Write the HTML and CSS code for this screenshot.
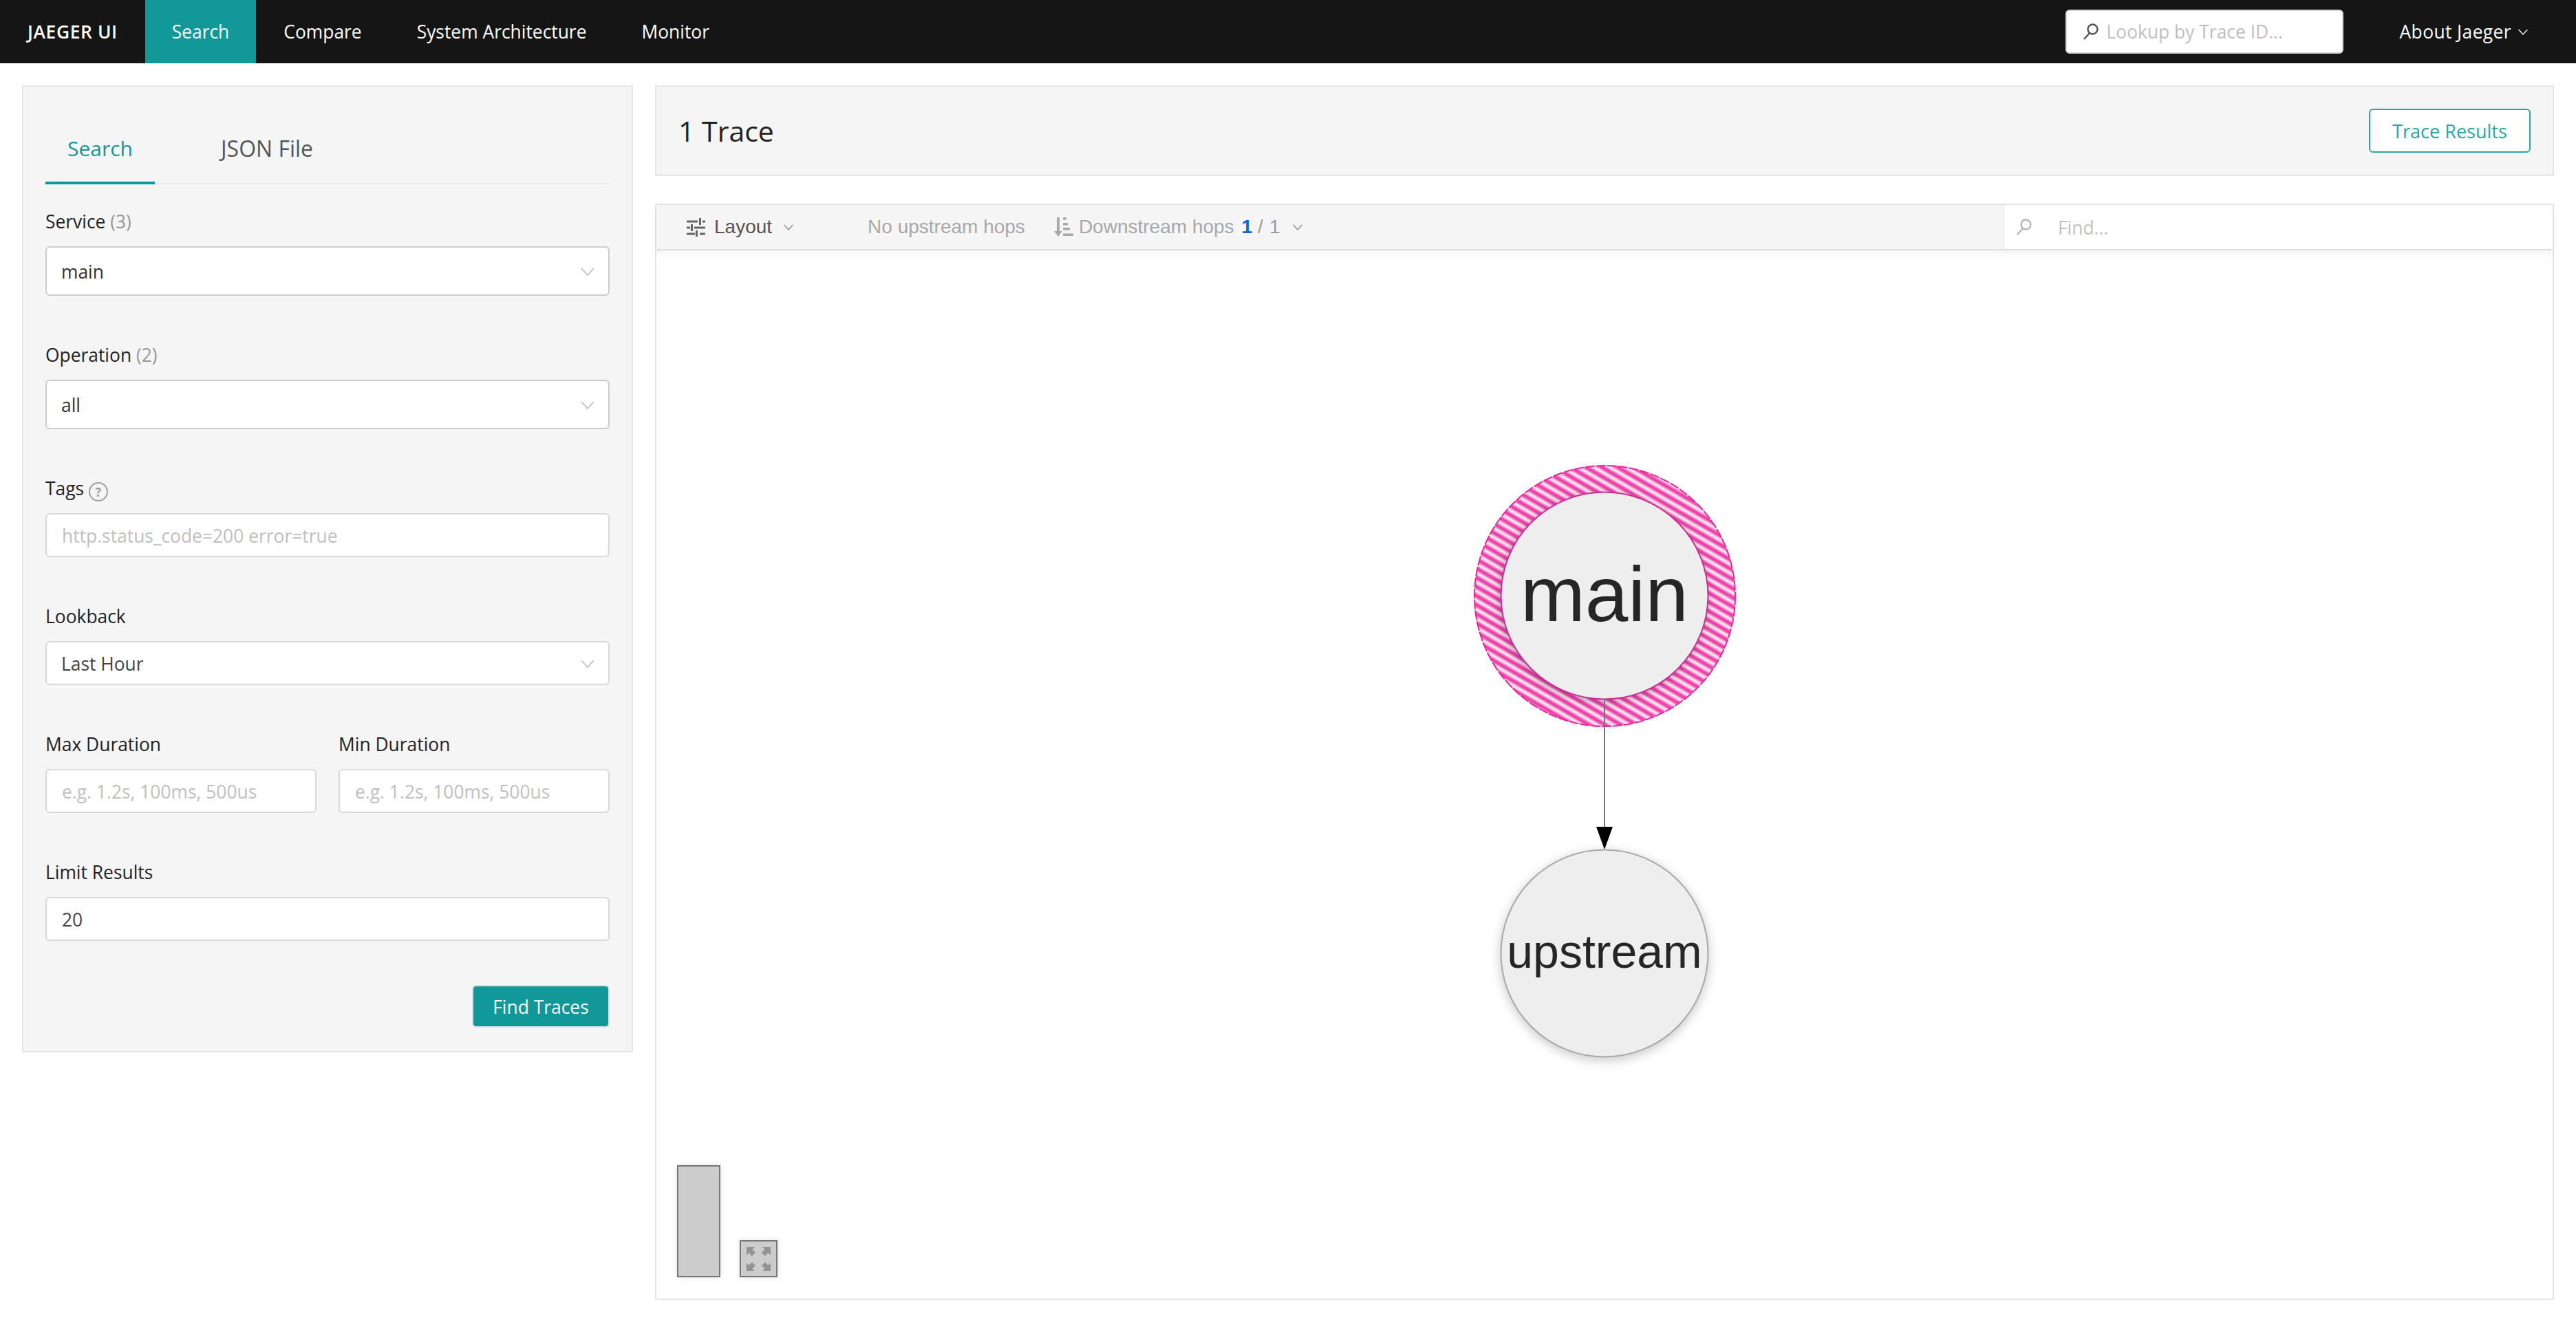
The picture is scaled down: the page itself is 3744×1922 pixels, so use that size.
FILE: index.html
```html
<!DOCTYPE html>
<html lang="en">
<head>
<meta charset="utf-8">
<title>Jaeger UI</title>
<link rel="stylesheet" href="styles.css">
</head>
<body>
<header class="topbar">
  <nav class="nav">
    <a class="nav-item brand">JAEGER UI</a>
    <a class="nav-item active">Search</a>
    <a class="nav-item">Compare</a>
    <a class="nav-item">System Architecture</a>
    <a class="nav-item">Monitor</a>
  </nav>
  <div class="lookup">
    <svg class="search-icon dark" viewBox="0 0 22 24"><circle cx="13.5" cy="8.5" r="7"/><path d="M9 14 L1 23"/></svg>
    <input class="lookup-input" placeholder="Lookup by Trace ID...">
  </div>
  <div class="about"><span class="about-text">About Jaeger</span>
    <svg class="chev chev-about" viewBox="0 0 20 12"><polyline points="1,1 10,11 19,1"/></svg>
  </div>
</header>

<main class="page">
  <aside class="search-panel">
    <div class="tabs">
      <div class="tab tab-on">Search</div>
      <div class="tab">JSON File</div>
    </div>
    <form class="form">
      <div class="field">
        <div class="label">Service <span class="count">(3)</span></div>
        <div class="select select-lg">main<svg class="chev" viewBox="0 0 20 12"><polyline points="1,1 10,11 19,1"/></svg></div>
      </div>
      <div class="field">
        <div class="label">Operation <span class="count">(2)</span></div>
        <div class="select select-lg">all<svg class="chev" viewBox="0 0 20 12"><polyline points="1,1 10,11 19,1"/></svg></div>
      </div>
      <div class="field">
        <div class="label">Tags <span class="help">?</span></div>
        <input class="input" placeholder="http.status_code=200 error=true">
      </div>
      <div class="field">
        <div class="label">Lookback</div>
        <div class="select">Last Hour<svg class="chev" viewBox="0 0 20 12"><polyline points="1,1 10,11 19,1"/></svg></div>
      </div>
      <div class="field two">
        <div>
          <div class="label">Max Duration</div>
          <input class="input" placeholder="e.g. 1.2s, 100ms, 500us">
        </div>
        <div>
          <div class="label">Min Duration</div>
          <input class="input" placeholder="e.g. 1.2s, 100ms, 500us">
        </div>
      </div>
      <div class="field">
        <div class="label">Limit Results</div>
        <input class="input" value="20">
      </div>
      <div class="actions"><button class="find" type="button">Find Traces</button></div>
    </form>
  </aside>

  <section class="results">
    <div class="results-head">
      <h2 class="title">1 Trace</h2>
      <button class="trace-results" type="button">Trace Results</button>
    </div>
    <div class="graph">
      <div class="toolbar">
        <div class="tools">
          <svg class="layout-icon" viewBox="0 0 27 27">
            <path d="M0 3.5H16V6.5H0Z M23 3.5H27V6.5H23Z M18 0H21V10H18Z M0 12.5H5V15.5H0Z M11 12.5H27V15.5H11Z M6 9H9V19H6Z M0 21.5H12V24.5H0Z M19 21.5H27V24.5H19Z M13 18H16V27H13Z"/>
          </svg>
          <span class="layout-label">Layout</span>
          <svg class="chev chev-tool" viewBox="0 0 20 12"><polyline points="1,1 10,11 19,1"/></svg>
          <span class="hops no-up">No upstream hops</span>
          <svg class="down-icon" viewBox="0 0 28 28">
            <path d="M4 0H8V20H12L6 28L0 20H4Z M13 0H18V3.5H13Z M13 8H20V11.5H13Z M13 15H23V18.500H13Z M13 23.500H28V27H13Z"/>
          </svg>
          <span class="hops">Downstream hops</span>
          <span class="hop-now">1</span>
          <span class="hop-sep">/</span>
          <span class="hop-total">1</span>
          <svg class="chev chev-hop" viewBox="0 0 20 12"><polyline points="1,1 10,11 19,1"/></svg>
        </div>
        <div class="find-box">
          <svg class="search-icon" viewBox="0 0 22 24"><circle cx="13.5" cy="8.5" r="7"/><path d="M9 14 L1 23"/></svg>
          <input class="find-input" placeholder="Find...">
        </div>
      </div>
      <div class="canvas">
        <svg class="ddg" viewBox="0 0 2756 1524">
          <defs>
            <linearGradient id="stripe" x1="0" y1="0" x2="0" y2="1">
              <stop offset="0" stop-color="#ea2ea0"/>
              <stop offset="0.2" stop-color="#f06cbc"/>
              <stop offset="0.38" stop-color="#f9cfe8"/>
              <stop offset="0.5" stop-color="#f5f0f3"/>
              <stop offset="0.62" stop-color="#f9cfe8"/>
              <stop offset="0.8" stop-color="#f06cbc"/>
              <stop offset="1" stop-color="#ea2ea0"/>
            </linearGradient>
            <pattern id="stripes" width="12" height="11.500" patternUnits="userSpaceOnUse" patternTransform="rotate(30)">
              <rect width="12" height="11.500" fill="url(#stripe)"/>
            </pattern>
          </defs>
          <circle class="halo" cx="1378.500" cy="502.500" r="189.500"/>
          <circle class="node node-main" cx="1378" cy="502" r="150.500"/>
          <line class="edge" x1="1378" y1="653" x2="1378" y2="840"/>
          <polygon class="arrow" points="1366,838 1390,838 1378,871"/>
          <circle class="node node-up" cx="1378" cy="1022" r="150.500"/>
          <text class="node-text text-main" x="1378" y="539">main</text>
          <text class="node-text text-up" x="1378" y="1043">upstream</text>
        </svg>
        <div class="minimap"></div>
        <div class="expand">
          <svg class="expand-icon" viewBox="0 0 35 35">
            <path d="M0 0H12L8.500 3.500L13 8L8 13L3.500 8.500L0 12Z M35 0H23L26.500 3.500L22 8L27 13L31.500 8.500L35 12Z M0 35H12L8.500 31.500L13 27L8 22L3.500 26.500L0 23Z M35 35H23L26.500 31.500L22 27L27 22L31.500 26.500L35 23Z"/>
          </svg>
        </div>
      </div>
    </div>
  </section>
</main>
</body>
</html>
```

FILE: styles.css
```css
* { box-sizing: border-box; }

html, body {
  margin: 0;
  padding: 0;
  background: #fff;
  font-family: "Open Sans", "Noto Sans", sans-serif;
  font-size: 26.4px;
  color: #222;
}

/* Top bar */
.topbar {
  height: 92px;
  background: #151515;
  display: flex;
  align-items: center;
  color: #fff;
  padding-right: 68px;
}
.nav { display: flex; flex: 1; height: 100%; }
.nav-item {
  display: block;
  padding: 0 40px;
  line-height: 92px;
  color: #fff;
  white-space: nowrap;
}
.brand { font-weight: 600; letter-spacing: 0.6px; }
.active { background: #119999; padding: 0 39px; }

.lookup {
  width: 404px;
  height: 64px;
  background: #fff;
  border: 2px solid #d9d9d9;
  border-radius: 6px;
  display: flex;
  align-items: center;
  padding-left: 24px;
  margin-right: 82px;
}
.search-icon { width: 22px; height: 24px; flex: none; fill: none; stroke: #b5b5b5; stroke-width: 2.400; }
.search-icon.dark { stroke: #555; }
.lookup-input {
  border: 0;
  outline: 0;
  flex: 1;
  min-width: 0;
  margin-left: 12px;
  font: inherit;
  background: transparent;
  padding: 0;
}
.lookup-input::placeholder,
.find-input::placeholder,
.input::placeholder { color: #bfbfbf; opacity: 1; }

.about { display: flex; align-items: center; white-space: nowrap; gap: 10px; }
.about-text { letter-spacing: 0.4px; }

.chev { fill: none; stroke: #bfbfbf; stroke-width: 1.800; width: 20px; height: 12px; }
.chev-about { stroke: #fff; width: 14px; height: 9px; margin-right: 2px; }

/* Layout */
.page {
  display: grid;
  grid-template-columns: 888px 1fr;
  gap: 32px;
  padding: 32px;
  align-items: start;
}

/* Search panel */
.search-panel {
  background: #f5f5f5;
  border: 2px solid #e6e6e6;
  padding: 0 32px 34px;
  height: 1406px;
}
.tabs {
  display: flex;
  height: 142px;
  border-bottom: 2px solid #e8e8e8;
  align-items: flex-end;
}
.tab {
  font-size: 32px;
  color: #555;
  padding: 0 32px;
  margin-right: 64px;
  height: 91px;
  line-height: 81px;
  white-space: nowrap;
}
.tab-on {
  color: #119999;
  font-size: 30px;
  font-weight: 500;
  border-bottom: 4px solid #119999;
  margin-bottom: -2px;
  height: 93px;
}
.form { margin-top: 32px; }
.field { margin-bottom: 64px; }
.two { display: grid; grid-template-columns: 1fr 1fr; gap: 32px; }
.label {
  line-height: 44px;
  margin-bottom: 14px;
  white-space: nowrap;
  color: #222;
}
.count { color: #999; }
.help {
  display: inline-flex;
  width: 28px;
  height: 28px;
  border: 2px solid #a0a0a0;
  border-radius: 50%;
  align-items: center;
  justify-content: center;
  color: #a0a0a0;
  font-size: 18px;
  font-weight: 700;
  vertical-align: -2px;
}
.select, .input {
  display: block;
  width: 100%;
  height: 64px;
  background: #fff;
  border: 2px solid #d9d9d9;
  border-radius: 6px;
  font: inherit;
  color: #444;
  padding: 2px 22px 0;
  outline: 0;
}
.select {
  display: flex;
  align-items: center;
  justify-content: space-between;
  padding-left: 21px;
  padding-right: 20px;
}
.select-lg { height: 72px; border-color: #cccccc; color: #333; }
.actions { display: flex; justify-content: flex-end; }
.find {
  width: 200px;
  height: 62px;
  background: #119999;
  color: #fff;
  border: 2px solid #e0e0e0;
  border-radius: 6px;
  font: inherit;
  padding: 2px 0 0;
}

/* Results */
.results { display: flex; flex-direction: column; gap: 40px; }
.results-head {
  height: 132px;
  background: #f5f5f5;
  border: 2px solid #e6e6e6;
  display: flex;
  align-items: center;
  justify-content: space-between;
  padding: 0 32px 0 32px;
}
.title { margin: 0; font-size: 41px; font-weight: 400; color: #222; }
.trace-results {
  width: 235px;
  height: 64px;
  background: #fff;
  border: 2px solid #2ba6a0;
  border-radius: 6px;
  color: #2ba6a0;
  font: inherit;
  font-size: 27px;
  padding: 0;
}

.graph {
  height: 1594px;
  border: 2px solid #e6e6e6;
  display: flex;
  flex-direction: column;
}
.toolbar {
  height: 66px;
  flex: none;
  background: #f5f5f5;
  border-bottom: 2px solid #dedede;
  box-shadow: 0 4px 10px rgba(0, 0, 0, 0.06);
  display: flex;
  position: relative;
  z-index: 1;
}
.tools {
  flex: 1;
  display: flex;
  align-items: center;
  padding-left: 44px;
  font-family: "Liberation Sans", Arial, sans-serif;
  font-size: 28px;
  color: #a8a8a8;
  white-space: nowrap;
}
.layout-icon { width: 27px; height: 27px; fill: #666; flex: none; }
.layout-label { color: #555; margin-left: 13px; }
.chev-tool { stroke: #888; width: 14px; height: 9px; margin-left: 17px; }
.no-up { margin-left: 108px; }
.down-icon { width: 28px; height: 28px; fill: #a8a8a8; margin-left: 42px; margin-right: 8px; flex: none; }
.hop-now { color: #0a66d6; font-weight: 700; margin-left: 11px; }
.hop-sep { margin-left: 8px; color: #999; }
.hop-total { margin-left: 9px; color: #999; }
.chev-hop { stroke: #888; width: 14px; height: 9px; margin-left: 19px; }
.find-box {
  width: 799px;
  background: #fff;
  border-left: 2px solid #ececec;
  display: flex;
  align-items: center;
  padding-left: 18px;
}
.find-input {
  border: 0;
  outline: 0;
  background: transparent;
  font: inherit;
  margin-left: 38px;
  flex: 1;
  min-width: 0;
  padding: 2px 0 0;
}

.canvas { position: relative; flex: 1; }
.ddg { position: absolute; left: 0; top: 0; width: 2756px; height: 1524px; }
.halo { fill: url(#stripes); stroke: #e8259c; stroke-width: 2; stroke-dasharray: 14 2; }
.node { fill: #eeeeee; }
.node-main { stroke: #d02a96; stroke-width: 2; filter: drop-shadow(-2px 3px 6px rgba(0, 0, 0, 0.25)); }
.node-up { stroke: #a8a8a8; stroke-width: 2; filter: drop-shadow(0 4px 8px rgba(0, 0, 0, 0.22)); }
.edge { stroke: #777; stroke-width: 2; }
.arrow { fill: #000; }
.node-text {
  font-family: "Liberation Sans", Arial, sans-serif;
  fill: #262626;
  text-anchor: middle;
}
.text-main { font-size: 112.5px; }
.text-up { font-size: 68px; }

.minimap, .expand {
  position: absolute;
  background: #cccccc;
  border: 2px solid #777;
  box-shadow: 0 0 8px rgba(0, 0, 0, 0.12);
}
.minimap { left: 30px; top: 1330px; width: 63px; height: 163px; }
.expand {
  left: 121px;
  top: 1439px;
  width: 55px;
  height: 54px;
  display: flex;
  align-items: center;
  justify-content: center;
}
.expand-icon { width: 35px; height: 35px; fill: #939393; }
```
